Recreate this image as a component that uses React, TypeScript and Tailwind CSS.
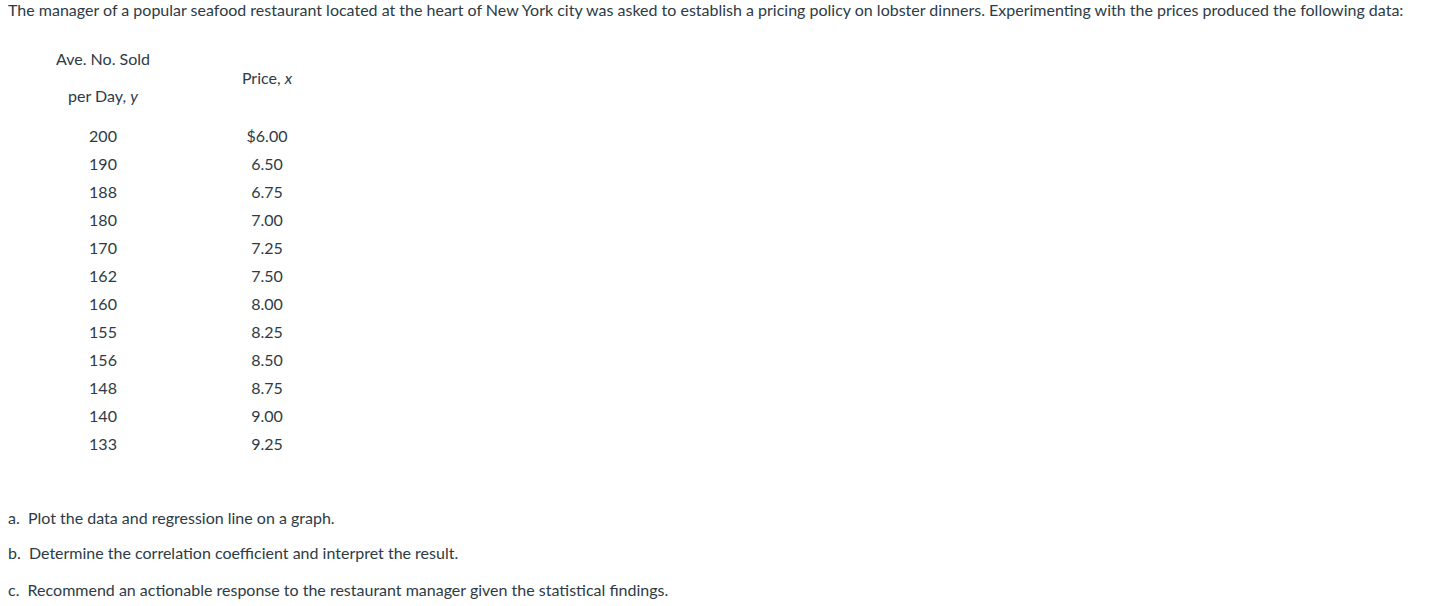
const rows: [string, string][] = [
  ['200', '$6.00'],
  ['190', '6.50'],
  ['188', '6.75'],
  ['180', '7.00'],
  ['170', '7.25'],
  ['162', '7.50'],
  ['160', '8.00'],
  ['155', '8.25'],
  ['156', '8.50'],
  ['148', '8.75'],
  ['140', '9.00'],
  ['133', '9.25'],
];

export default function App() {
  return (
    <div className="min-h-[606px] bg-white px-2 text-[16px] leading-[20px] text-[#2d3b45] font-['Lato',sans-serif]">
      <p>
        The manager of a popular seafood restaurant located at the heart of New York city was asked to establish a
        pricing policy on lobster dinners. Experimenting with the prices produced the following data:
      </p>

      <div className="mt-[29px] ml-[32px] grid grid-cols-[126px_202px]">
        <div className="flex h-[73px] flex-col items-center pb-[16px]">
          <p>Ave. No. Sold</p>
          <p className="mt-[17px]">
            per Day, <i>y</i>
          </p>
        </div>
        <div className="flex h-[73px] items-center justify-center pb-[16px]">
          <p>
            Price, <i>x</i>
          </p>
        </div>
        {rows.map(([y, x]) => (
          <div key={y + x} className="contents">
            <div className="flex h-[28px] items-center justify-center">{y}</div>
            <div className="flex h-[28px] items-center justify-center">{x}</div>
          </div>
        ))}
      </div>

      <div className="mt-[50px]">
        <p>a.&nbsp; Plot the data and regression line on a graph.</p>
        <p className="mt-[15px]">b.&nbsp; Determine the correlation coefficient and interpret the result.</p>
        <p className="mt-[17px]">
          c.&nbsp; Recommend an actionable response to the restaurant manager given the statistical findings.
        </p>
      </div>
    </div>
  );
}
